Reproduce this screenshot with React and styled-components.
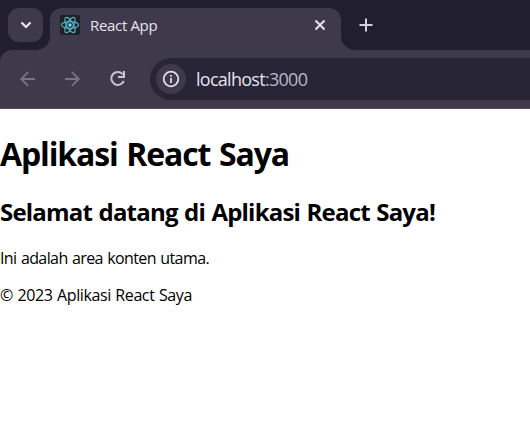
import React from "react";
import styled, { createGlobalStyle } from "styled-components";

const GlobalStyle = createGlobalStyle`
  * { box-sizing: border-box; }
  body { margin: 0; background: #fff; overflow: hidden; }
`;

const Window = styled.div`
  width: 100%;
  height: 447px;
  overflow: hidden;
  font-family: "Open Sans", "Noto Sans", sans-serif;
`;

const TabStrip = styled.div`
  display: flex;
  height: 50px;
  padding: 8px 0 0 8px;
  background: #201e2f;
`;

const TabSearch = styled.div`
  display: flex;
  align-items: center;
  justify-content: center;
  width: 35px;
  height: 34px;
  margin-right: 7px;
  border-radius: 11px;
  background: #3e3a4b;
`;

const Tab = styled.div`
  position: relative;
  display: flex;
  align-items: center;
  width: 291px;
  height: 42px;
  padding: 0 14px 8px 10px;
  border-radius: 12px 12px 0 0;
  background: #3e3a4b;

  &::before,
  &::after {
    content: "";
    position: absolute;
    bottom: 0;
    width: 14px;
    height: 14px;
  }
  &::before {
    left: -14px;
    background: radial-gradient(circle at 0 0, transparent 13.5px, #3e3a4b 14.5px);
  }
  &::after {
    right: -14px;
    background: radial-gradient(circle at 100% 0, transparent 13.5px, #3e3a4b 14.5px);
  }
`;

const Label = styled.span`
  font-size: ${(p) => p.$size}px;
  letter-spacing: ${(p) => p.$spacing}px;
  color: #e7e2f0;
  white-space: nowrap;
`;

const TabTitle = styled(Label)`
  flex: 1;
  margin-left: 10px;
`;

const NewTab = styled.div`
  display: flex;
  align-items: center;
  height: 34px;
  margin-left: 18px;
`;

const Toolbar = styled.div`
  display: flex;
  align-items: center;
  height: 59px;
  padding: 0 0 1px 18px;
  background: linear-gradient(#3e3a4b, #3e3a4b) 0 0 / 100% 58px no-repeat, #504e5a;
`;

const ToolbarFrame = styled.div`
  background: #201e2f;
  ${Toolbar} { border-top-left-radius: 12px; }
`;

const Navigation = styled.div`
  display: flex;
  gap: 25px;
  width: 132px;
`;

const AddressBar = styled.div`
  display: flex;
  align-items: center;
  flex: 1;
  height: 42px;
  padding-left: 6px;
  border-radius: 21px 0 0 21px;
  background: #282536;
`;

const SiteInfo = styled.div`
  display: flex;
  align-items: center;
  justify-content: center;
  width: 30px;
  height: 30px;
  margin-right: 10px;
  border-radius: 50%;
  background: #3e3a4b;
`;

const Port = styled.span`
  color: #bcb7c9;
`;

const Content = styled.main`
  color: #000;
  white-space: nowrap;
`;

const Heading = styled.h1`
  margin: 23px 0 0;
  font-size: 32px;
  line-height: 43px;
  font-weight: 700;
  letter-spacing: -1.15px;
  word-spacing: 1.6px;
`;

const Subheading = styled.h2`
  margin: 21px 0 0;
  font-size: 24px;
  line-height: 32px;
  font-weight: 700;
  letter-spacing: -0.8px;
  word-spacing: 1px;
`;

const Paragraph = styled.p`
  margin: ${(p) => p.$top}px 0 0;
  font-size: 16px;
  line-height: 21px;
  letter-spacing: ${(p) => p.$spacing}px;
  word-spacing: 0.8px;
`;

const Icon = ({ width = 20, height = width, color = "#d3cfdf", stroke = 2, children }) => (
  <svg width={width} height={height} viewBox={`0 0 ${width} ${height}`} fill="none" stroke={color} strokeWidth={stroke}>
    {children}
  </svg>
);

const ReactLogo = () => (
  <Icon color="#4fafc6" stroke={1.2}>
    <rect width="20" height="20" rx="2" fill="#202124" stroke="none" />
    <g transform="translate(10 10)">
      <ellipse rx="8.6" ry="3.3" />
      <ellipse rx="8.6" ry="3.3" transform="rotate(60)" />
      <ellipse rx="8.6" ry="3.3" transform="rotate(120)" />
      <circle r="1.7" fill="#7cdcf0" stroke="none" />
    </g>
  </Icon>
);

export default function App() {
  return (
    <>
      <GlobalStyle />
      <Window>
        <TabStrip>
          <TabSearch>
            <Icon width={12} height={8} stroke={2.2} color="#eeeaf5">
              <path d="M1.5 1.5 6 6l4.5-4.5" />
            </Icon>
          </TabSearch>
          <Tab>
            <ReactLogo />
            <TabTitle $size={15} $spacing={-0.33}>React App</TabTitle>
            <Icon width={14} color="#e7e2f0">
              <path d="m2.5 2.5 9 9m0-9-9 9" />
            </Icon>
          </Tab>
          <NewTab>
            <Icon width={14}>
              <path d="M7 .5v13M.5 7h13" />
            </Icon>
          </NewTab>
        </TabStrip>
        <ToolbarFrame>
          <Toolbar>
            <Navigation>
              <Icon color="#777384" stroke={1.8}>
                <path d="M17 10H3.5M10 3.2 3.2 10l6.8 6.8" />
              </Icon>
              <Icon color="#777384" stroke={1.8}>
                <path d="M2 10h13.5M9 3.2 15.8 10 9 16.8" />
              </Icon>
              <Icon color="#c9c4d6">
                <path d="M15 5.5A6.5 6.5 0 1 0 15.8 12" />
                <path d="M16 2v6h-6" />
              </Icon>
            </Navigation>
            <AddressBar>
              <SiteInfo>
                <Icon width={18} color="#e1dceb" stroke={1.8}>
                  <circle cx="9" cy="9" r="7.3" />
                  <path d="M9 8v5M9 5v1.8" />
                </Icon>
              </SiteInfo>
              <Label $size={18} $spacing={-0.72}>
                localhost<Port>:3000</Port>
              </Label>
            </AddressBar>
          </Toolbar>
        </ToolbarFrame>
        <Content>
          <Heading>Aplikasi React Saya</Heading>
          <Subheading>Selamat datang di Aplikasi React Saya!</Subheading>
          <Paragraph $top={20} $spacing={-0.6}>Ini adalah area konten utama.</Paragraph>
          <Paragraph $top={16} $spacing={-0.4}>© 2023 Aplikasi React Saya</Paragraph>
        </Content>
      </Window>
    </>
  );
}
